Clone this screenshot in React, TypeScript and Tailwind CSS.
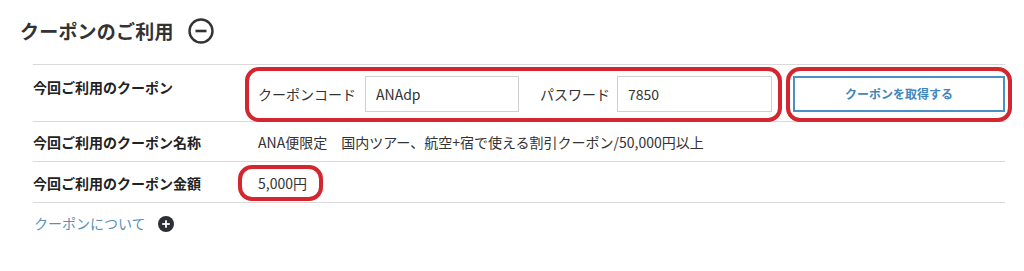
const FONT = "font-['Noto_Sans_CJK_JP','Noto_Sans',sans-serif]";

function MinusCircle() {
  return (
    <svg width="26" height="26" viewBox="0 0 26 26" aria-hidden="true">
      <circle cx="13" cy="13" r="11.5" fill="none" stroke="#333" strokeWidth="2.4" />
      <line x1="7.5" y1="13" x2="18.5" y2="13" stroke="#333" strokeWidth="2.6" />
    </svg>
  );
}

function PlusCircle() {
  return (
    <svg width="16" height="16" viewBox="0 0 16 16" aria-hidden="true">
      <circle cx="8" cy="8" r="8" fill="#2b2f38" />
      <line x1="4.2" y1="8" x2="11.8" y2="8" stroke="#fff" strokeWidth="1.8" />
      <line x1="8" y1="4.2" x2="8" y2="11.8" stroke="#fff" strokeWidth="1.8" />
    </svg>
  );
}

function Mark({ className }: { className: string }) {
  return (
    <div
      className={`pointer-events-none absolute rounded-[14px] border-4 border-[#d3262f] ${className}`}
    />
  );
}

export default function App() {
  return (
    <div className={`h-[271px] w-[1024px] bg-white text-[#333] ${FONT}`}>
      <div className="flex h-[64px] items-center gap-[14px] pl-[20px] pb-[2px]">
        <h2 className="text-[19px] font-bold tracking-[0.2px] text-[#333]">
          クーポンのご利用
        </h2>
        <MinusCircle />
      </div>

      <dl className="relative ml-[33px] w-[972px] border-t border-[#d9d9d9] text-[14px]">
        <div className="relative flex h-[57px] border-b border-[#d9d9d9]">
          <dt className="w-[225px] pt-[12px] font-bold text-[#222]">
            今回ご利用のクーポン
          </dt>
          <dd className="flex items-center pt-[2px]">
            <span className="w-[107px]">クーポンコード</span>
            <div className="flex h-[36px] w-[154px] items-center border border-[#d0d0d0] px-[10px]">
              ANAdp
            </div>
            <span className="ml-[21px] w-[77px]">パスワード</span>
            <div className="flex h-[36px] w-[155px] items-center border border-[#d0d0d0] px-[10px]">
              7850
            </div>
            <button className="ml-[21px] flex h-[36px] w-[212px] items-center justify-center border-2 border-[#4a90c6] text-[12px] font-bold text-[#3f86bd]">
              クーポンを取得する
            </button>
          </dd>
          <Mark className="left-[212px] top-[2px] h-[55px] w-[537px]" />
          <Mark className="left-[753px] top-[2px] h-[55px] w-[226px]" />
        </div>

        <div className="flex h-[40px] border-b border-[#d9d9d9]">
          <dt className="w-[225px] pt-[10px] font-bold text-[#222]">
            今回ご利用のクーポン名称
          </dt>
          <dd className="pt-[10px]">
            ANA便限定　国内ツアー、航空+宿で使える割引クーポン/50,000円以上
          </dd>
        </div>

        <div className="relative flex h-[41px] border-b border-[#d9d9d9]">
          <dt className="w-[225px] pt-[11px] font-bold text-[#222]">
            今回ご利用のクーポン金額
          </dt>
          <dd className="pt-[11px]">5,000円</dd>
          <Mark className="left-[205px] top-[3px] h-[36px] w-[85px]" />
        </div>
      </dl>

      <div className="ml-[34px] mt-[10px] flex items-center gap-[12px]">
        <a className="text-[14px] text-[#5b90b5]">クーポンについて</a>
        <PlusCircle />
      </div>
    </div>
  );
}
